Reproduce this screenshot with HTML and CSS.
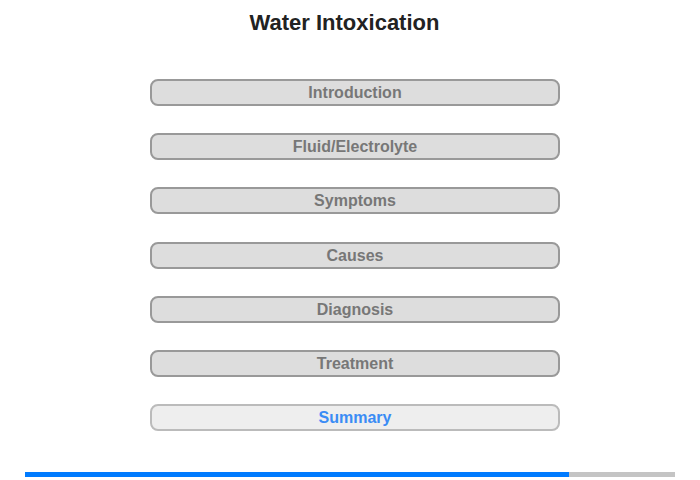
FILE: index.html
```html
<!DOCTYPE html>
<html>
<head>
<meta charset="utf-8">
<link rel="stylesheet" href="styles.css">
</head>
<body>
<div class="page">
  <h1 class="title">Water Intoxication</h1>
  <nav class="menu">
    <div class="item">Introduction</div>
    <div class="item">Fluid/Electrolyte</div>
    <div class="item">Symptoms</div>
    <div class="item">Causes</div>
    <div class="item">Diagnosis</div>
    <div class="item">Treatment</div>
    <div class="item current">Summary</div>
  </nav>
  <div class="progress"><div class="fill" style="width:544px"></div></div>
</div>
</body>
</html>
```
FILE: styles.css
```css
html, body { margin: 0; padding: 0; background: #fff; }
body { font-family: "Liberation Sans", Arial, sans-serif; width: 700px; height: 480px; overflow: hidden; }
.page { display: flex; flex-direction: column; }
.title {
  margin: 10px 0 0 0;
  font-size: 22px;
  font-weight: bold;
  color: #222;
  text-align: center;
  line-height: 26px;
  padding-right: 11px;
}
.menu {
  display: flex;
  flex-direction: column;
  gap: 27.2px;
  margin: 43px 0 0 150px;
  width: 410px;
}
.item {
  box-sizing: border-box;
  height: 27px;
  border: 2px solid #999;
  border-radius: 8px;
  background: #ddd;
  color: #777;
  font-size: 16px;
  font-weight: bold;
  text-align: center;
  line-height: 23px;
}
.item.current {
  background: #eee;
  border-color: #bbb;
  color: #3a8cf5;
}
.progress {
  margin: 41px 0 0 25px;
  width: 650px;
  height: 5px;
  background: #c4c4c4;
}
.fill { height: 100%; background: #007bff; }
```
